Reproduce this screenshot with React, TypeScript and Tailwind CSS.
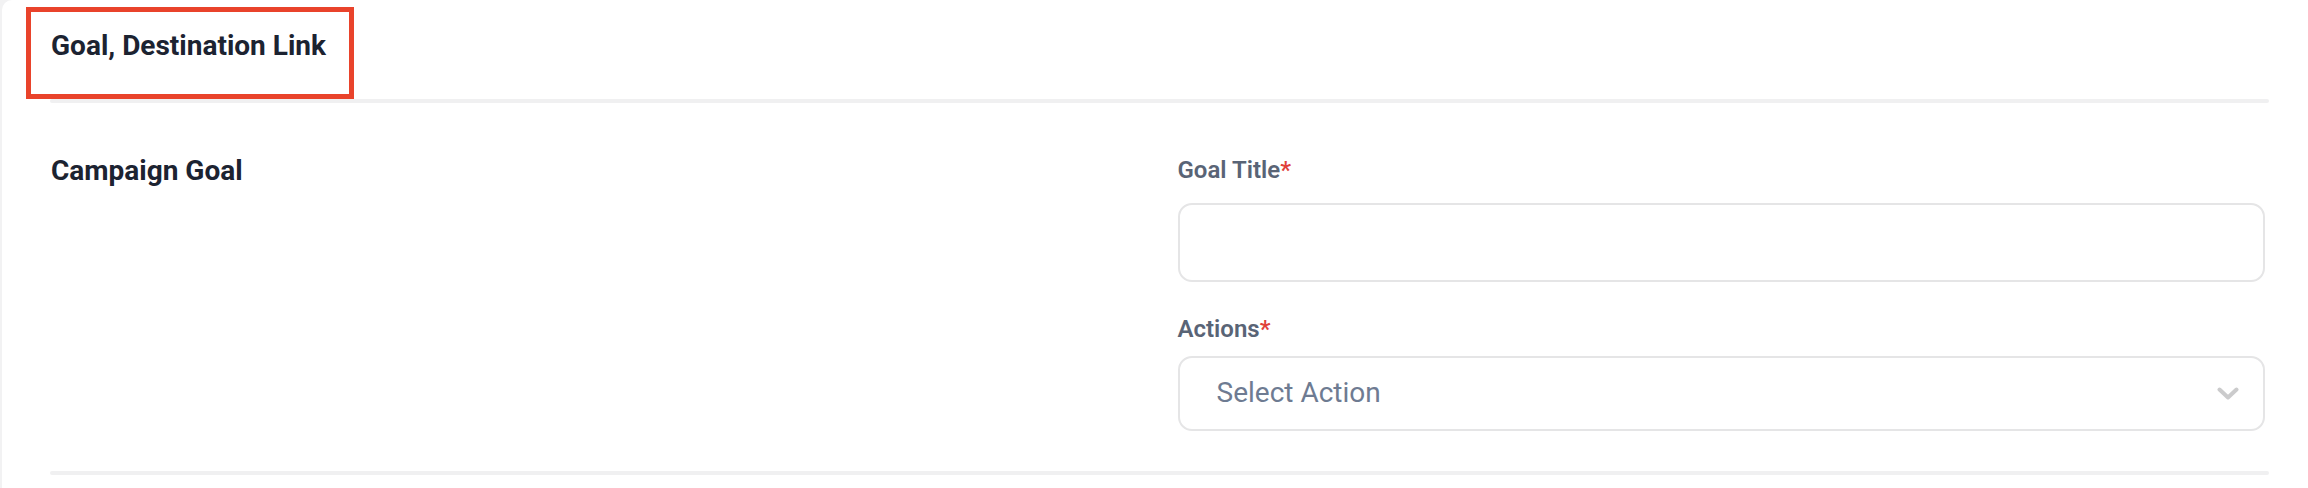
export default function App() {
    return (
        <div className="flex min-h-[488px] bg-[#f2f2f3] pl-[2px] font-['Roboto','Liberation_Sans',sans-serif]">
            <div className="flex-1 rounded-tl-[10px] bg-white pr-[39px]">
                {/* Tab header */}
                <div className="pl-[24px] pt-[7px]">
                    <div className="h-[92px] w-[328px] border-[5px] border-[#e9432b] pl-[20px] pt-[17px] text-[28px] font-bold leading-[34px] text-[#1c2331]">
                        Goal, Destination Link
                    </div>
                </div>
                <div className="ml-[48px] h-[4px] rounded-full bg-[#f0f0f1]" />

                {/* Campaign goal section */}
                <div className="ml-[48px] grid grid-cols-2 gap-x-[36px] pb-[40px] pt-[51px]">
                    <div className="pl-[1px] text-[28px] font-bold leading-[34px] text-[#1c2331]">Campaign Goal</div>
                    <div className="flex flex-col pr-[4px]">
                        <label className="text-[24px] font-semibold leading-[32px] text-[#596476]">
                            Goal Title<span className="text-[#e0413a]">*</span>
                        </label>
                        <div className="mt-[17px] h-[79px] rounded-[14px] border-2 border-[#e5e5e6] bg-white" />
                        <label className="mt-[31px] text-[24px] font-semibold leading-[32px] text-[#596476]">
                            Actions<span className="text-[#e0413a]">*</span>
                        </label>
                        <div className="mt-[11px] flex h-[75px] items-center justify-between rounded-[14px] border-2 border-[#e5e5e6] bg-white pl-[37px] pr-[24px]">
                            <span className="pb-[2px] text-[28px] text-[#6e7b92]">Select Action</span>
                            <svg width="22" height="13" viewBox="0 0 22 13" fill="none">
                                <path d="M2.5 2.5 L11 10.5 L19.5 2.5" stroke="#cbcbcc" strokeWidth="4" strokeLinecap="round" strokeLinejoin="round" />
                            </svg>
                        </div>
                    </div>
                </div>
                <div className="ml-[48px] h-[4px] rounded-full bg-[#f0f0f1]" />
            </div>
        </div>
    );
}
